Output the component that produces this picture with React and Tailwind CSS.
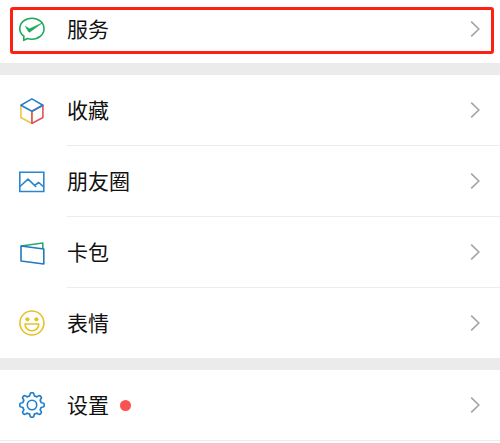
const polar = (radius, degrees) => {
  const angle = (degrees * Math.PI) / 180
  return `${(13 + radius * Math.sin(angle)).toFixed(2)} ${(13 - radius * Math.cos(angle)).toFixed(2)}`
}

// Eight rounded teeth, joined by shallow valleys
const gearPath =
  [0, 45, 90, 135, 180, 225, 270, 315]
    .map((a) => {
      const start = a === 0 ? `M${polar(9.8, -13)}` : ''
      return `${start}L${polar(11.2, a - 10)}C${polar(12.8, a - 7)} ${polar(12.8, a + 7)} ${polar(11.2, a + 10)}L${polar(9.8, a + 13)}Q${polar(8.8, a + 17)} ${polar(9.6, a + 22.5)}Q${polar(8.8, a + 28)} ${polar(9.8, a + 32)}`
    })
    .join('') + 'Z'

const Icon = ({ children }) => (
  <svg
    className="w-[26px] h-[26px] shrink-0"
    viewBox="0 0 26 26"
    fill="none"
    strokeWidth="1.6"
    strokeLinejoin="round"
    aria-hidden="true"
  >
    {children}
  </svg>
)

const ServiceIcon = () => (
  <Icon>
    <path
      stroke="#1fa95c"
      d="M4.900 20.200C2.300 18.300 .8 15.700 .8 12.700C.8 6.700 6.200 2.200 12.900 2.200s12.100 4.500 12.100 10.500S19.600 23.200 12.900 23.200c-1.500 0-3-.2-4.300-.6L4.700 24.300z"
    />
    <path
      fill="#1fa95c"
      stroke="#1fa95c"
      strokeWidth=".5"
      d="M6.300 10.300l4.400 2.400L23.600 6.700 11 15.900c-.6.400-1.200.3-1.600-.3z"
    />
  </Icon>
)

const FavoritesIcon = () => (
  <Icon>
    <path stroke="#efc544" d="M1.900 7.200v12.300l11 6V13" />
    <path stroke="#e0525a" d="M12.900 25.500l11-6V7.200L12.900 13.200z" />
    <path stroke="#2480ca" d="M1.900 7.200L12.900 .9l11 6.300-11 6z" />
  </Icon>
)

const MomentsIcon = () => (
  <Icon>
    <path stroke="#2a86d0" strokeLinejoin="miter" d="M.8 3.200h24v19.300H.8z" />
    <path stroke="#2a86d0" d="M1 17.500l8-7.300 8.200 7.600 M15.500 16.500l4.200-3 5 4.300" />
  </Icon>
)

const CardsIcon = () => (
  <Icon>
    <path stroke="#25ab72" d="M2 6L23.800 3v6" />
    <path stroke="#2478c0" d="M2 6l22.800 3v15L2 21z" />
  </Icon>
)

const StickersIcon = () => (
  <Icon>
    <circle stroke="#e6c229" cx="12.900" cy="13" r="12" />
    <circle fill="#e6c229" cx="8.400" cy="9.300" r="2.100" />
    <circle fill="#e6c229" cx="17.400" cy="9.300" r="2.100" />
    <path stroke="#e6c229" d="M6 14h13.800c0 4-2.900 6.800-6.900 6.800S6 18 6 14z" />
  </Icon>
)

const SettingsIcon = () => (
  <Icon>
    <path stroke="#1f7dcb" d={gearPath} />
    <circle stroke="#1f7dcb" cx="13" cy="13" r="4.700" />
  </Icon>
)

const Chevron = () => (
  <svg className="w-[10px] h-[16px] shrink-0" viewBox="0 0 10 16" fill="none" aria-hidden="true">
    <path stroke="#a6a6a6" strokeWidth="1.700" d="M1.200 .6L8.800 8 1.200 15.400" />
  </svg>
)

const MenuRow = ({ icon: RowIcon, label, divider, badge }) => (
  <button type="button" className="w-full flex items-center pl-[19px] text-left">
    <RowIcon />
    <span
      className={`ml-[22px] flex-1 flex items-center pr-5 ${
        divider ? 'h-[71px] border-b border-[#ececec]' : 'h-[70px]'
      }`}
    >
      <span className="pb-[2px]">{label}</span>
      {badge && <span className="ml-[11px] w-[11px] h-[11px] rounded-full bg-[#fa5151]" />}
      <span className="ml-auto flex">
        <Chevron />
      </span>
    </span>
  </button>
)

const menuItems = [
  { label: '收藏', icon: FavoritesIcon },
  { label: '朋友圈', icon: MomentsIcon },
  { label: '卡包', icon: CardsIcon },
  { label: '表情', icon: StickersIcon },
]

const App = () => {
  return (
    <main className="bg-white text-[21px] leading-[30px] text-[#111111] font-['Noto_Sans_CJK_SC',sans-serif]">
      <section className="relative">
        <button type="button" className="w-full h-[63px] pb-[6px] pl-[19px] pr-5 flex items-center text-left">
          <ServiceIcon />
          <span className="ml-[22px] flex-1 pb-[2px]">服务</span>
          <Chevron />
        </button>
        {/* Highlight around the services entry */}
        <div className="absolute left-[10px] right-[6px] top-[7px] h-[47px] border-3 border-[#ff2014] rounded-[3px] pointer-events-none" />
      </section>

      <section className="border-t-12 border-[#ebebeb]">
        {menuItems.map((item, index) => (
          <MenuRow key={item.label} {...item} divider={index < menuItems.length - 1} />
        ))}
      </section>

      <section className="border-t-12 border-b border-[#ebebeb]">
        <MenuRow label="设置" icon={SettingsIcon} badge />
      </section>
    </main>
  )
}

export default App
